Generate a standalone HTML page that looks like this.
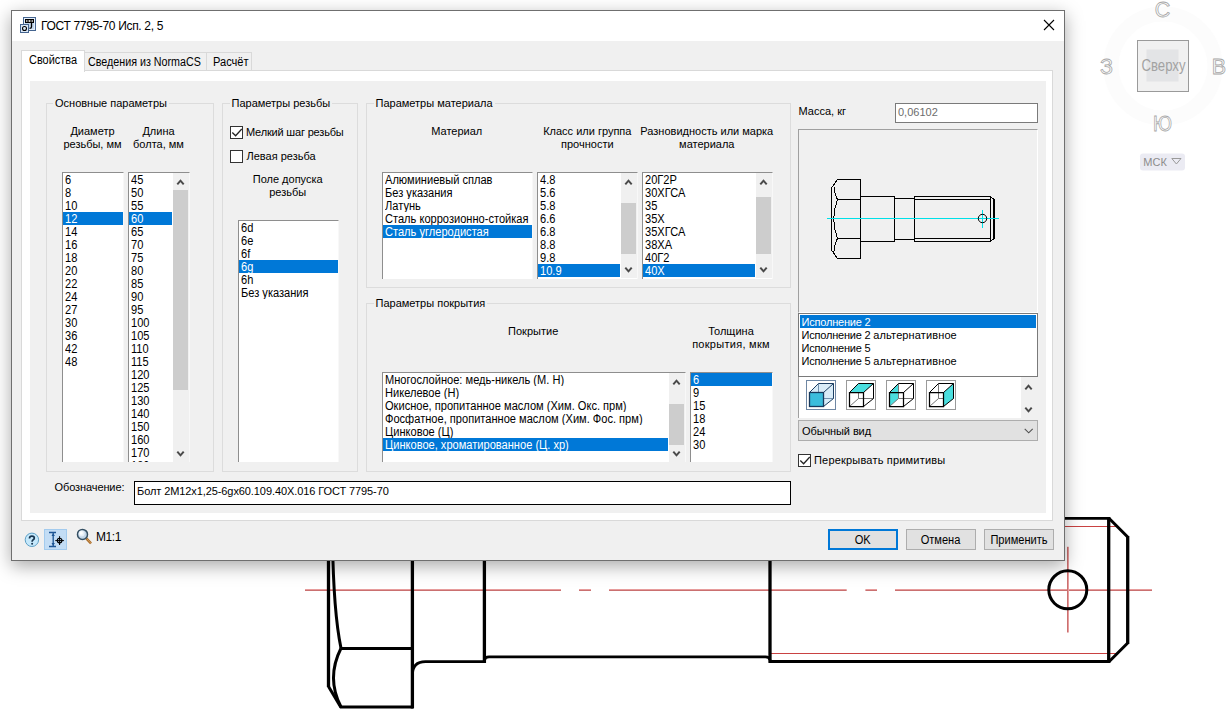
<!DOCTYPE html>
<html lang="ru">
<head>
<meta charset="utf-8">
<title>ГОСТ 7795-70 Исп. 2, 5</title>
<style>
*{box-sizing:border-box;margin:0;padding:0}
html,body{width:1229px;height:718px;overflow:hidden;background:#fff}
body{position:relative;font-family:"Liberation Sans",sans-serif;font-size:11px;color:#000;line-height:13px}
.a{position:absolute}
#bg{position:absolute;left:0;top:0;width:1229px;height:718px}
#dlg{position:absolute;left:11px;top:10px;width:1054px;height:551px;background:#f0f0f0;border:1px solid #6f6f6f;box-shadow:0 5px 17px 0 rgba(0,0,0,.34)}
#in{position:absolute;left:-12px;top:-11px;width:1229px;height:718px}
#title{left:12px;top:11px;width:1052px;height:30px;background:#fff}
.t12{font-size:12px;line-height:14px;white-space:nowrap}
.t11{font-size:11px;line-height:13px;white-space:nowrap}
.c{text-align:center}
.n{font-size:12px;line-height:14px;white-space:nowrap}
.tab{border:1px solid #d9d9d9;background:#f0f0f0}
.gb{border:1px solid #dcdcdc}
.gl{background:#f0f0f0;padding:0 2px;white-space:nowrap}
.lb{background:#fff;border-top:1px solid #8e8e8e;border-left:1px solid #8e8e8e;border-right:1px solid #f8f8f8;overflow:hidden}
.lb div.r{height:13px;line-height:13px;padding-left:2px;white-space:nowrap;font-size:12px;overflow:hidden}
.lb div.r span{display:inline-block;transform:scaleX(.923);transform-origin:0 0;line-height:13px;height:13px;position:relative;top:1px}
.lb div.s{background:#0078d7;color:#fff}
.sb{background:#f0f0f0}
.th{background:#cdcdcd}
.btn{background:#e1e1e1;border:1px solid #adadad;text-align:center;white-space:nowrap}
.bs{display:inline-block;transform:scaleX(.923)}
.cb{width:13px;height:13px;background:#fff;border:1px solid #333}
</style>
</head>
<body>
<svg id="bg" viewBox="0 0 1229 718">
<g fill="none" stroke-width="1">
<path stroke="#e79c9c" d="M305 589.500H561M579 589.500H591M609 589.500H846.700M865.400 589.500H877M895 589.500H1152"/>
<path stroke="#ca7070" d="M305 590.500H561M579 590.500H591M609 590.500H846.700M865.400 590.500H877M895 590.500H1152"/>
<path stroke="#ca7070" d="M1067.500 546.800V632.500"/>
<path stroke="#e79c9c" d="M1068.500 546.800V632.500"/>
</g>
<g fill="none" stroke="#c94242" stroke-width="1">
<path d="M1060 526.500H1117M770 653.500H1117"/>
</g>
<g fill="none" stroke="#000" stroke-width="2.800" stroke-linejoin="miter">
<path d="M340 707H413"/>
<path d="M341 648.500H412"/>
<path d="M412.400 675Q412.400 661.600 425.500 661.600H485"/>
<path d="M484.500 660Q485 656.800 489 656.800H765.500Q769.500 656.800 770 660"/>
<path d="M769 661.500H1109.500M1060 518.400H1109.500"/>
</g>
<g fill="none" stroke="#000" stroke-width="3.300">
<path d="M328.500 540V687"/>
<path d="M412.400 540V708.400"/>
<path d="M484.400 540V663"/>
<path d="M770 540V662.900"/>
<path d="M1108.700 517V662.900"/>
<path d="M1127.700 536V644"/>
</g>
<g fill="none" stroke="#000" stroke-width="3">
<path d="M328.500 686.500L341 707.500"/>
<path d="M332.500 540Q333.500 612 341 648.300"/>
<path d="M341 648.300Q326 678 341 707"/>
<path d="M1108.700 518L1127.700 537M1127.700 643L1108.700 662"/>
<circle cx="1067.800" cy="589.800" r="19"/>
</g>
</svg>
<svg class="a" style="left:1095px;top:0" width="134" height="180" viewBox="1095 0 134 180"><circle cx="1163" cy="66" r="52" fill="none" stroke="#fcfcfc" stroke-width="15"/><rect x="1137.5" y="40.500" width="51" height="51" fill="#f1f1f1" stroke="#9a9a9a"/><rect x="1146.500" y="49.500" width="32" height="32" fill="#e3e4e6"/><g font-family="Liberation Sans" font-size="21.500" fill="#fff" stroke="#a6a6a6" stroke-width=".8" text-anchor="middle"><text x="1162.500" y="17">С</text><text x="1106.500" y="73.800">З</text><text x="1219" y="73.800">В</text><text x="1162.500" y="131" textLength="19" lengthAdjust="spacingAndGlyphs">Ю</text></g><text x="1163.500" y="70.700" font-family="Liberation Sans" font-size="16" fill="#a2a2a2" text-anchor="middle" textLength="44" lengthAdjust="spacingAndGlyphs">Сверху</text><rect x="1140" y="153.500" width="45" height="17" rx="3" fill="#ebebf3"/><text x="1143.300" y="165.700" font-family="Liberation Sans" font-size="11" fill="#8c8c8c">МСК</text><path d="M1171.800 158.500H1181L1176.400 164Z" fill="none" stroke="#9a9a9a" stroke-width="1"/></svg>
<div id="dlg"><div id="in">
<div id="title" class="a"></div>
<svg class="a" style="left:19px;top:16px" width="19" height="19" viewBox="19 16 19 19">
<rect x="23.5" y="17.5" width="12" height="13" fill="#c4d8ee" stroke="#44648f"/>
<rect x="24.5" y="18.5" width="10" height="11" fill="none" stroke="#e4eefa" stroke-width="1"/>
<rect x="20.5" y="24.5" width="8" height="8" fill="#dbe8f6" stroke="#44648f"/>
<circle cx="24.5" cy="28.5" r="2" fill="none" stroke="#000" stroke-width="1.1"/>
<rect x="25.6" y="19.6" width="7.8" height="2.8" fill="#fff" stroke="#000" stroke-width="1.2"/>
<path d="M28 19.6V22.4M31 19.6V22.4" stroke="#000" stroke-width="1.2"/>
<path d="M31.5 22.5V27Q31.5 28.3 29.5 28.3" fill="none" stroke="#000" stroke-width="1.3"/>
</svg>
<div class="a t12" style="left:41px;top:19px;letter-spacing:-.33px">ГОСТ 7795-70 Исп. 2, 5</div>
<svg class="a" style="left:1043px;top:19px" width="12" height="12" viewBox="0 0 12 12"><path d="M1 1L11 11M11 1L1 11" stroke="#000" stroke-width="1.1" fill="none"/></svg>
<div class="a" style="left:21px;top:70px;width:1032px;height:451px;background:#fff;border:1px solid #d9d9d9"></div>
<div class="a tab" style="left:84px;top:52px;width:123px;height:19px"></div>
<div class="a tab" style="left:206px;top:52px;width:46px;height:19px"></div>
<div class="a" style="left:21px;top:50px;width:64px;height:22px;background:#fff;border:1px solid #d9d9d9;border-bottom:none"></div>
<div class="a n" style="left:28.5px;top:53px;transform:scaleX(0.91);transform-origin:0 0;">Свойства</div>
<div class="a n" style="left:88px;top:55px;transform:scaleX(0.893);transform-origin:0 0;">Сведения из NormaCS</div>
<div class="a n" style="left:213px;top:55px;transform:scaleX(0.923);transform-origin:0 0;">Расчёт</div>
<div class="a" style="left:30px;top:81px;width:1016px;height:432px;background:#f0f0f0"></div>
<div class="a gb" style="left:46px;top:103px;width:168px;height:369px"></div><div class="a gl t11" style="left:53px;top:97px">Основные параметры</div>
<div class="a t11 c" style="left:-7.5px;top:125px;width:200px;">Диаметр<br>резьбы, мм</div>
<div class="a t11 c" style="left:58.5px;top:125px;width:200px;">Длина<br>болта, мм</div>
<div class="a lb" style="left:62px;top:172px;width:62px;height:290px"><div class="r"><span>6</span></div><div class="r"><span>8</span></div><div class="r"><span>10</span></div><div class="r s"><span>12</span></div><div class="r"><span>14</span></div><div class="r"><span>16</span></div><div class="r"><span>18</span></div><div class="r"><span>20</span></div><div class="r"><span>22</span></div><div class="r"><span>24</span></div><div class="r"><span>27</span></div><div class="r"><span>30</span></div><div class="r"><span>36</span></div><div class="r"><span>42</span></div><div class="r"><span>48</span></div></div>
<div class="a lb" style="left:128px;top:172px;width:62px;height:290px"><div class="r"><span>45</span></div><div class="r"><span>50</span></div><div class="r"><span>55</span></div><div class="r s"><span>60</span></div><div class="r"><span>65</span></div><div class="r"><span>70</span></div><div class="r"><span>75</span></div><div class="r"><span>80</span></div><div class="r"><span>85</span></div><div class="r"><span>90</span></div><div class="r"><span>95</span></div><div class="r"><span>100</span></div><div class="r"><span>105</span></div><div class="r"><span>110</span></div><div class="r"><span>115</span></div><div class="r"><span>120</span></div><div class="r"><span>125</span></div><div class="r"><span>130</span></div><div class="r"><span>140</span></div><div class="r"><span>150</span></div><div class="r"><span>160</span></div><div class="r"><span>170</span></div><div class="r"><span>180</span></div></div>
<div class="a" style="left:172px;top:173px;width:1px;height:289px;background:#fff"></div><div class="a sb" style="left:173px;top:173px;width:16px;height:289px"></div><div class="a th" style="left:173px;top:190px;width:15px;height:200px"></div><svg class="a" style="left:176.1px;top:179px" width="9" height="6" viewBox="0 0 9 6"><path d="M1.300 5.300L4.500 1.700L7.700 5.300" fill="none" stroke="#4a4a4a" stroke-width="2"/></svg><svg class="a" style="left:176.1px;top:451px" width="9" height="6" viewBox="0 0 9 6"><path d="M1.300 .700L4.500 4.300L7.700 .700" fill="none" stroke="#4a4a4a" stroke-width="2"/></svg>
<div class="a gb" style="left:222px;top:103px;width:136px;height:369px"></div><div class="a gl t11" style="left:229.5px;top:97px">Параметры резьбы</div>
<div class="a cb" style="left:230px;top:126px"><svg class="a" style="left:0;top:0" width="11" height="11" viewBox="0 0 11 11"><path d="M1.300 5.500L4.600 8.700L10.800 2" fill="none" stroke="#222" stroke-width="1.3"/></svg></div>
<div class="a t11" style="left:246px;top:126px;letter-spacing:-.18px">Мелкий шаг резьбы</div>
<div class="a cb" style="left:230px;top:150px"></div>
<div class="a t11" style="left:246.5px;top:150px;">Левая резьба</div>
<div class="a t11 c" style="left:187.7px;top:173px;width:200px;">Поле допуска<br>резьбы</div>
<div class="a lb" style="left:238px;top:220px;width:101px;height:242px"><div class="r"><span>6d</span></div><div class="r"><span>6e</span></div><div class="r"><span>6f</span></div><div class="r s"><span>6g</span></div><div class="r"><span>6h</span></div><div class="r"><span>Без указания</span></div></div>
<div class="a gb" style="left:366px;top:103px;width:425px;height:185px"></div><div class="a gl t11" style="left:373.5px;top:97px">Параметры материала</div>
<div class="a t11 c" style="left:356.8px;top:125px;width:200px;">Материал</div>
<div class="a t11 c" style="left:487.29999999999995px;top:125px;width:200px;">Класс или группа<br>прочности</div>
<div class="a t11 c" style="left:606.8px;top:125px;width:200px;">Разновидность или марка<br>материала</div>
<div class="a lb" style="left:382px;top:172px;width:151px;height:107px"><div class="r"><span>Алюминиевый сплав</span></div><div class="r"><span>Без указания</span></div><div class="r"><span>Латунь</span></div><div class="r"><span>Сталь коррозионно-стойкая</span></div><div class="r s"><span>Сталь углеродистая</span></div></div>
<div class="a lb" style="left:537px;top:172px;width:101px;height:107px"><div class="r"><span>4.8</span></div><div class="r"><span>5.6</span></div><div class="r"><span>5.8</span></div><div class="r"><span>6.6</span></div><div class="r"><span>6.8</span></div><div class="r"><span>8.8</span></div><div class="r"><span>9.8</span></div><div class="r s"><span>10.9</span></div></div>
<div class="a" style="left:620px;top:173px;width:1px;height:105px;background:#fff"></div><div class="a sb" style="left:621px;top:173px;width:16px;height:105px"></div><div class="a th" style="left:621px;top:203px;width:15px;height:51px"></div><svg class="a" style="left:624.1px;top:179px" width="9" height="6" viewBox="0 0 9 6"><path d="M1.300 5.300L4.500 1.700L7.700 5.300" fill="none" stroke="#4a4a4a" stroke-width="2"/></svg><svg class="a" style="left:624.1px;top:267px" width="9" height="6" viewBox="0 0 9 6"><path d="M1.300 .700L4.500 4.300L7.700 .700" fill="none" stroke="#4a4a4a" stroke-width="2"/></svg>
<div class="a lb" style="left:642px;top:172px;width:131px;height:107px"><div class="r"><span>20Г2Р</span></div><div class="r"><span>30ХГСА</span></div><div class="r"><span>35</span></div><div class="r"><span>35Х</span></div><div class="r"><span>35ХГСА</span></div><div class="r"><span>38ХА</span></div><div class="r"><span>40Г2</span></div><div class="r s"><span>40Х</span></div></div>
<div class="a" style="left:755px;top:173px;width:1px;height:105px;background:#fff"></div><div class="a sb" style="left:756px;top:173px;width:16px;height:105px"></div><div class="a th" style="left:756px;top:197px;width:15px;height:57px"></div><svg class="a" style="left:759.1px;top:179px" width="9" height="6" viewBox="0 0 9 6"><path d="M1.300 5.300L4.500 1.700L7.700 5.300" fill="none" stroke="#4a4a4a" stroke-width="2"/></svg><svg class="a" style="left:759.1px;top:267px" width="9" height="6" viewBox="0 0 9 6"><path d="M1.300 .700L4.500 4.300L7.700 .700" fill="none" stroke="#4a4a4a" stroke-width="2"/></svg>
<div class="a gb" style="left:366px;top:303px;width:425px;height:169px"></div><div class="a gl t11" style="left:373.5px;top:297px">Параметры покрытия</div>
<div class="a t11 c" style="left:433.20000000000005px;top:325px;width:200px;">Покрытие</div>
<div class="a t11 c" style="left:631.0px;top:325px;width:200px;">Толщина<br><span style="letter-spacing:.28px">покрытия, мкм</span></div>
<div class="a lb" style="left:382px;top:372px;width:304px;height:90px"><div class="r"><span>Многослойное: медь-никель (М. Н)</span></div><div class="r"><span>Никелевое (Н)</span></div><div class="r"><span>Окисное, пропитанное маслом (Хим. Окс. прм)</span></div><div class="r"><span>Фосфатное, пропитанное маслом (Хим. Фос. прм)</span></div><div class="r"><span>Цинковое (Ц)</span></div><div class="r s"><span>Цинковое, хроматированное (Ц. хр)</span></div></div>
<div class="a" style="left:668px;top:373px;width:1px;height:89px;background:#fff"></div><div class="a sb" style="left:669px;top:373px;width:16px;height:89px"></div><div class="a th" style="left:669px;top:404px;width:15px;height:41px"></div><svg class="a" style="left:672.1px;top:379px" width="9" height="6" viewBox="0 0 9 6"><path d="M1.300 5.300L4.500 1.700L7.700 5.300" fill="none" stroke="#4a4a4a" stroke-width="2"/></svg><svg class="a" style="left:672.1px;top:451px" width="9" height="6" viewBox="0 0 9 6"><path d="M1.300 .700L4.500 4.300L7.700 .700" fill="none" stroke="#4a4a4a" stroke-width="2"/></svg>
<div class="a lb" style="left:690px;top:372px;width:83px;height:90px"><div class="r s"><span>6</span></div><div class="r"><span>9</span></div><div class="r"><span>15</span></div><div class="r"><span>18</span></div><div class="r"><span>24</span></div><div class="r"><span>30</span></div></div>
<div class="a t11" style="left:54.5px;top:481px;letter-spacing:-.1px">Обозначение:</div>
<div class="a t11" style="left:134px;top:481px;width:657px;height:24px;background:#fff;border:1px solid #000;padding:3px 0 0 2px;letter-spacing:-.09px">Болт 2М12х1,25-6gх60.109.40Х.016 ГОСТ 7795-70</div>
<div class="a t11" style="left:798.5px;top:104.5px;">Масса, кг</div>
<div class="a t11" style="left:895px;top:103px;width:143px;height:20px;background:#fff;border:1px solid #7a7a7a;padding:2px 0 0 2px;color:#6d6d6d">0,06102</div>
<div class="a" style="left:798px;top:129px;width:240px;height:184px;background:#f0f0f0;border:1px solid #a0a0a0;border-right-color:#fff;border-bottom-color:#fff"></div>
<svg class="a" style="left:800px;top:131px" width="236" height="181" viewBox="800 131 236 181" shape-rendering="crispEdges">
<g fill="none" stroke="#000" stroke-width="1">
<path d="M837.5 179.5H860.5V258.5H837.5L831.5 250V188Z"/>
<path d="M837.5 199.5H860.5M837.5 238.5H860.5"/>
<path d="M834 184.500Q833.5 192 837.5 199.5Q830 219 837.5 238.5Q833.500 246 834 253.5"/>
<path d="M860.5 196.500H894.5V241.500H860.5"/>
<path d="M894.5 198.500H914.500M894.500 239.500H914.500"/>
<path d="M914.500 196.500H990.500V241.500H914.500Z"/>
<path d="M914.500 199.500H990.500M914.500 238.500H990.500"/>
<path d="M990.500 196.500L994.500 200V238L990.500 241.500"/>
<path d="M993.500 199.500V238.500"/>
</g>
<g fill="none" stroke="#00e0e8" stroke-width="1">
<path d="M827 218.500H999M982.500 210V228"/>
</g>
<circle cx="982.500" cy="218.500" r="4.2" fill="none" stroke="#000" stroke-width="1" shape-rendering="auto"/>
</svg>
<div class="a" style="left:798px;top:313px;width:240px;height:64px;background:#fff;border:1px solid #7a7a7a"></div>
<div class="a t11 ex" style="left:800px;top:315px;width:236px;height:13px;padding-left:1.5px;line-height:15px;overflow:hidden;background:#0078d7;color:#fff;"><span style="letter-spacing:-.2px">Исполнение 2 </span></div>
<div class="a t11 ex" style="left:800px;top:328px;width:236px;height:13px;padding-left:1.5px;line-height:15px;overflow:hidden;"><span style="letter-spacing:-.2px">Исполнение 2 </span><span style="letter-spacing:.12px">альтернативное</span></div>
<div class="a t11 ex" style="left:800px;top:341px;width:236px;height:13px;padding-left:1.5px;line-height:15px;overflow:hidden;"><span style="letter-spacing:-.2px">Исполнение 5 </span></div>
<div class="a t11 ex" style="left:800px;top:354px;width:236px;height:13px;padding-left:1.5px;line-height:15px;overflow:hidden;"><span style="letter-spacing:-.2px">Исполнение 5 </span><span style="letter-spacing:.12px">альтернативное</span></div>
<div class="a" style="left:798px;top:377px;width:240px;height:41px;background:#fff;border-left:1px solid #a0a0a0"></div>
<div class="a sb" style="left:1021px;top:377px;width:17px;height:41px"></div>
<svg class="a" style="left:1023.9px;top:384px" width="9" height="6" viewBox="0 0 9 6"><path d="M1.300 5.300L4.500 1.700L7.700 5.300" fill="none" stroke="#4a4a4a" stroke-width="2"/></svg>
<svg class="a" style="left:1023.9px;top:407px" width="9" height="6" viewBox="0 0 9 6"><path d="M1.300 .700L4.500 4.300L7.700 .700" fill="none" stroke="#4a4a4a" stroke-width="2"/></svg>
<svg class="a" style="left:806px;top:380px" width="30" height="30" viewBox="806 380 30 30"><rect x="806.5" y="380.5" width="29" height="29" fill="#fff" stroke="#6f87a3"/><path d="M809.5 392.5L818.5 383.5H833.5V398.5L823.5 406.5V392.5Z" fill="#d9ecf8"/><path d="M818.5 383.5V398.5H833.5" fill="none" stroke="#5a7a9a" stroke-width=".8"/><path d="M809.5 392.5L818.5 383.5H833.5V398.5L823.5 406.5M823.5 392.5L833.5 383.5" fill="none" stroke="#1d3f63" stroke-width="1"/><rect x="809.5" y="392.5" width="14.0" height="14.0" fill="#3abddc" stroke="#17395c" stroke-width="1.300"/></svg>
<svg class="a" style="left:846px;top:380px" width="30" height="30" viewBox="846 380 30 30"><rect x="846.5" y="380.5" width="29" height="29" fill="#fff" stroke="#9a9a9a"/><path d="M858.5 383.5V398.5H873.5M858.5 398.5L849.5 406.5" fill="none" stroke="#777" stroke-width="1"/><path d="M849.5 392.5L858.5 383.5H873.5L863.5 392.5Z" fill="#4adede"/><path d="M849.5 392.5L858.5 383.5H873.5V398.5L863.5 406.5M863.5 392.5L873.5 383.5" fill="none" stroke="#000" stroke-width="1"/><path d="M849.5 392.5H863.5V406.5H849.5Z" fill="none" stroke="#000" stroke-width="1.250"/></svg>
<svg class="a" style="left:886px;top:380px" width="30" height="30" viewBox="886 380 30 30"><rect x="886.5" y="380.5" width="29" height="29" fill="#fff" stroke="#9a9a9a"/><path d="M889.5 392.5L898.5 383.5V398.5L889.5 406.5Z" fill="#4adede"/><path d="M898.5 383.5V398.5H913.5M898.5 398.5L889.5 406.5" fill="none" stroke="#777" stroke-width="1"/><path d="M889.5 392.5L898.5 383.5H913.5V398.5L903.5 406.5M903.5 392.5L913.5 383.5" fill="none" stroke="#000" stroke-width="1"/><path d="M889.5 392.5H903.5V406.5H889.5Z" fill="none" stroke="#000" stroke-width="1.250"/></svg>
<svg class="a" style="left:926px;top:380px" width="30" height="30" viewBox="926 380 30 30"><rect x="926.5" y="380.5" width="29" height="29" fill="#fff" stroke="#9a9a9a"/><path d="M938.5 383.5V398.5H953.5M938.5 398.5L929.5 406.5" fill="none" stroke="#777" stroke-width="1"/><path d="M943.5 392.5L953.5 383.5V398.5L943.5 406.5Z" fill="#4adede"/><path d="M929.5 392.5L938.5 383.5H953.5V398.5L943.5 406.5M943.5 392.5L953.5 383.5" fill="none" stroke="#000" stroke-width="1"/><path d="M929.5 392.5H943.5V406.5H929.5Z" fill="none" stroke="#000" stroke-width="1.250"/></svg>
<div class="a t11" style="left:798px;top:420px;width:240px;height:21px;background:#e1e1e1;border:1px solid #adadad;padding:4px 0 0 3px;letter-spacing:-.1px">Обычный вид</div>
<svg class="a" style="left:1024.200px;top:428px" width="10" height="6" viewBox="0 0 10 6"><path d="M.7 .8L4.700 4.800L8.700 .8" fill="none" stroke="#505050" stroke-width="1.1"/></svg>
<div class="a cb" style="left:798px;top:454px"><svg class="a" style="left:0;top:0" width="11" height="11" viewBox="0 0 11 11"><path d="M1.300 5.500L4.600 8.700L10.800 2" fill="none" stroke="#222" stroke-width="1.3"/></svg></div>
<div class="a t11" style="left:814px;top:454px;letter-spacing:.19px">Перекрывать примитивы</div>
<svg class="a" style="left:24px;top:532px" width="16" height="16" viewBox="0 0 16 16"><circle cx="7.900" cy="7.800" r="6.700" fill="#c5e8fb" stroke="#5c9fc6" stroke-width="1"/><path d="M5.500 6.400Q5.500 4.100 7.900 4.100Q10.300 4.100 10.300 6Q10.300 7.100 9.200 7.800Q8.100 8.500 8.100 9.800" fill="none" stroke="#17344f" stroke-width="1.700"/><circle cx="8.100" cy="11.700" r="1" fill="#17344f"/></svg>
<div class="a" style="left:44px;top:529px;width:23px;height:21px;background:#c3ddf5;border:1px solid #a3cbee"></div>
<svg class="a" style="left:44px;top:529px" width="24" height="21" viewBox="0 0 24 21">
<path d="M5 3.500H12M5 17.500H12" stroke="#1d5594" stroke-width="1.300" fill="none"/>
<path d="M9.200 4V17" stroke="#1d5594" stroke-width="1.300" fill="none"/>
<path d="M9.200 4.200l-1.700 2.900h3.400zM9.200 16.800l-1.700-2.900h3.400z" fill="#1d5594"/>
<circle cx="15.600" cy="11.600" r="2.300" fill="none" stroke="#000" stroke-width="1.100"/>
<path d="M11.300 11.600H19.900M15.600 7.200V16" stroke="#000" stroke-width="1"/>
</svg>
<svg class="a" style="left:76px;top:528px" width="18" height="18" viewBox="0 0 18 18">
<path d="M10.300 10.300L15 15.300" stroke="#a96a28" stroke-width="2.600" stroke-linecap="butt"/><path d="M11 11L15 15.300" stroke="#d9a866" stroke-width=".8"/>
<circle cx="6.500" cy="6.400" r="5" fill="#c3d6e8" stroke="#344f62" stroke-width="1.500"/>
<circle cx="5.700" cy="5.500" r="3" fill="#e6eff7"/><circle cx="5.200" cy="5" r="1.700" fill="#fbfdfe"/>
</svg>
<div class="a t12" style="left:96px;top:530px;letter-spacing:-.4px">М1:1</div>
<div class="a btn n" style="left:828px;top:529px;width:70px;height:21px;border:2px solid #0078d7;padding-top:2px"><span class="bs">OK</span></div>
<div class="a btn n" style="left:906px;top:529px;width:70px;height:21px;padding-top:3px"><span class="bs">Отмена</span></div>
<div class="a btn n" style="left:984px;top:529px;width:70px;height:21px;padding-top:3px"><span class="bs">Применить</span></div>
</div></div>
</body>
</html>
